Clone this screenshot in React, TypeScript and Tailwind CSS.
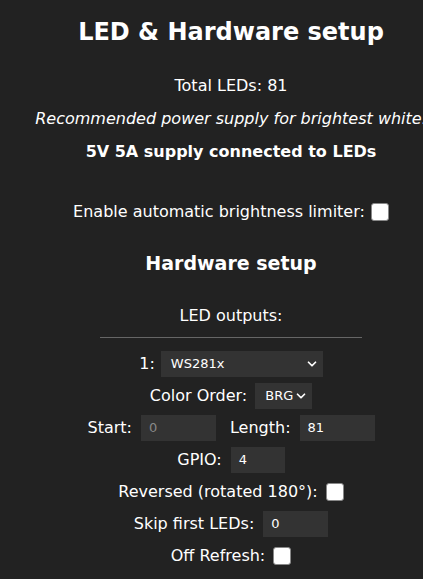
import { ChevronDown } from 'lucide-react';

function Box() {
  return <span className="inline-block w-[18px] h-[18px] rounded-[3px] bg-white border border-[#888] align-middle" />;
}

function Field({ value, w, muted }: { value: string; w: string; muted?: boolean }) {
  return (
    <span
      className={`inline-flex items-center h-[26px] bg-[#333] px-[8px] text-[13px] ${w} ${muted ? 'text-[#888]' : 'text-white'}`}
    >
      {value}
    </span>
  );
}

function Select({ value, w }: { value: string; w: string }) {
  return (
    <span className={`inline-flex items-center justify-between h-[26px] bg-[#333] pl-[10px] pr-[4px] text-[13px] text-white ${w}`}>
      {value}
      <ChevronDown className="w-[14px] h-[14px]" strokeWidth={3} />
    </span>
  );
}

export default function App() {
  return (
    <div className="w-[423px] h-[579px] overflow-hidden bg-[#222] text-white" style={{ fontFamily: '"DejaVu Sans", Verdana, sans-serif' }}>
      <div className="w-[462px] text-center">
        <h1 className="pt-[15px] text-[24px] font-bold leading-[34px]">LED &amp; Hardware setup</h1>
        <p className="mt-[20px] text-[16px] leading-[33px]">Total LEDs: 81</p>
        <p className="text-[16px] italic leading-[33px] whitespace-nowrap">Recommended power supply for brightest white.</p>
        <p className="text-[16px] font-bold leading-[33px]">5V 5A supply connected to LEDs</p>
        <div className="mt-[32px] flex items-center justify-center gap-[6px] text-[16px] leading-[24px]">
          <span>Enable automatic brightness limiter:</span>
          <Box />
        </div>
        <h3 className="mt-[25px] text-[19px] font-bold leading-[28px]">Hardware setup</h3>
        <p className="mt-[27px] text-[16px] leading-[24px]">LED outputs:</p>
        <div className="mx-auto mt-[9px] w-[262px] h-px bg-[#666]" />
        <div className="mt-[13px] flex flex-col gap-[6px] text-[16px]">
          <div className="flex items-center justify-center gap-[6px]">
            <span>1:</span>
            <Select value="WS281x" w="w-[162px]" />
          </div>
          <div className="flex items-center justify-center gap-[8px]">
            <span>Color Order:</span>
            <Select value="BRG" w="w-[57px]" />
          </div>
          <div className="flex items-center justify-center">
            <span className="mr-[9px]">Start:</span>
            <Field value="0" w="w-[75px]" muted />
            <span className="ml-[14px] mr-[9px]">Length:</span>
            <Field value="81" w="w-[75px]" />
          </div>
          <div className="flex items-center justify-center gap-[9px]">
            <span>GPIO:</span>
            <Field value="4" w="w-[54px]" />
          </div>
          <div className="flex items-center justify-center gap-[8px] h-[26px]">
            <span>Reversed (rotated 180°):</span>
            <Box />
          </div>
          <div className="flex items-center justify-center gap-[9px]">
            <span>Skip first LEDs:</span>
            <Field value="0" w="w-[65px]" />
          </div>
          <div className="flex items-center justify-center gap-[8px] h-[26px]">
            <span>Off Refresh:</span>
            <Box />
          </div>
        </div>
      </div>
    </div>
  );
}
